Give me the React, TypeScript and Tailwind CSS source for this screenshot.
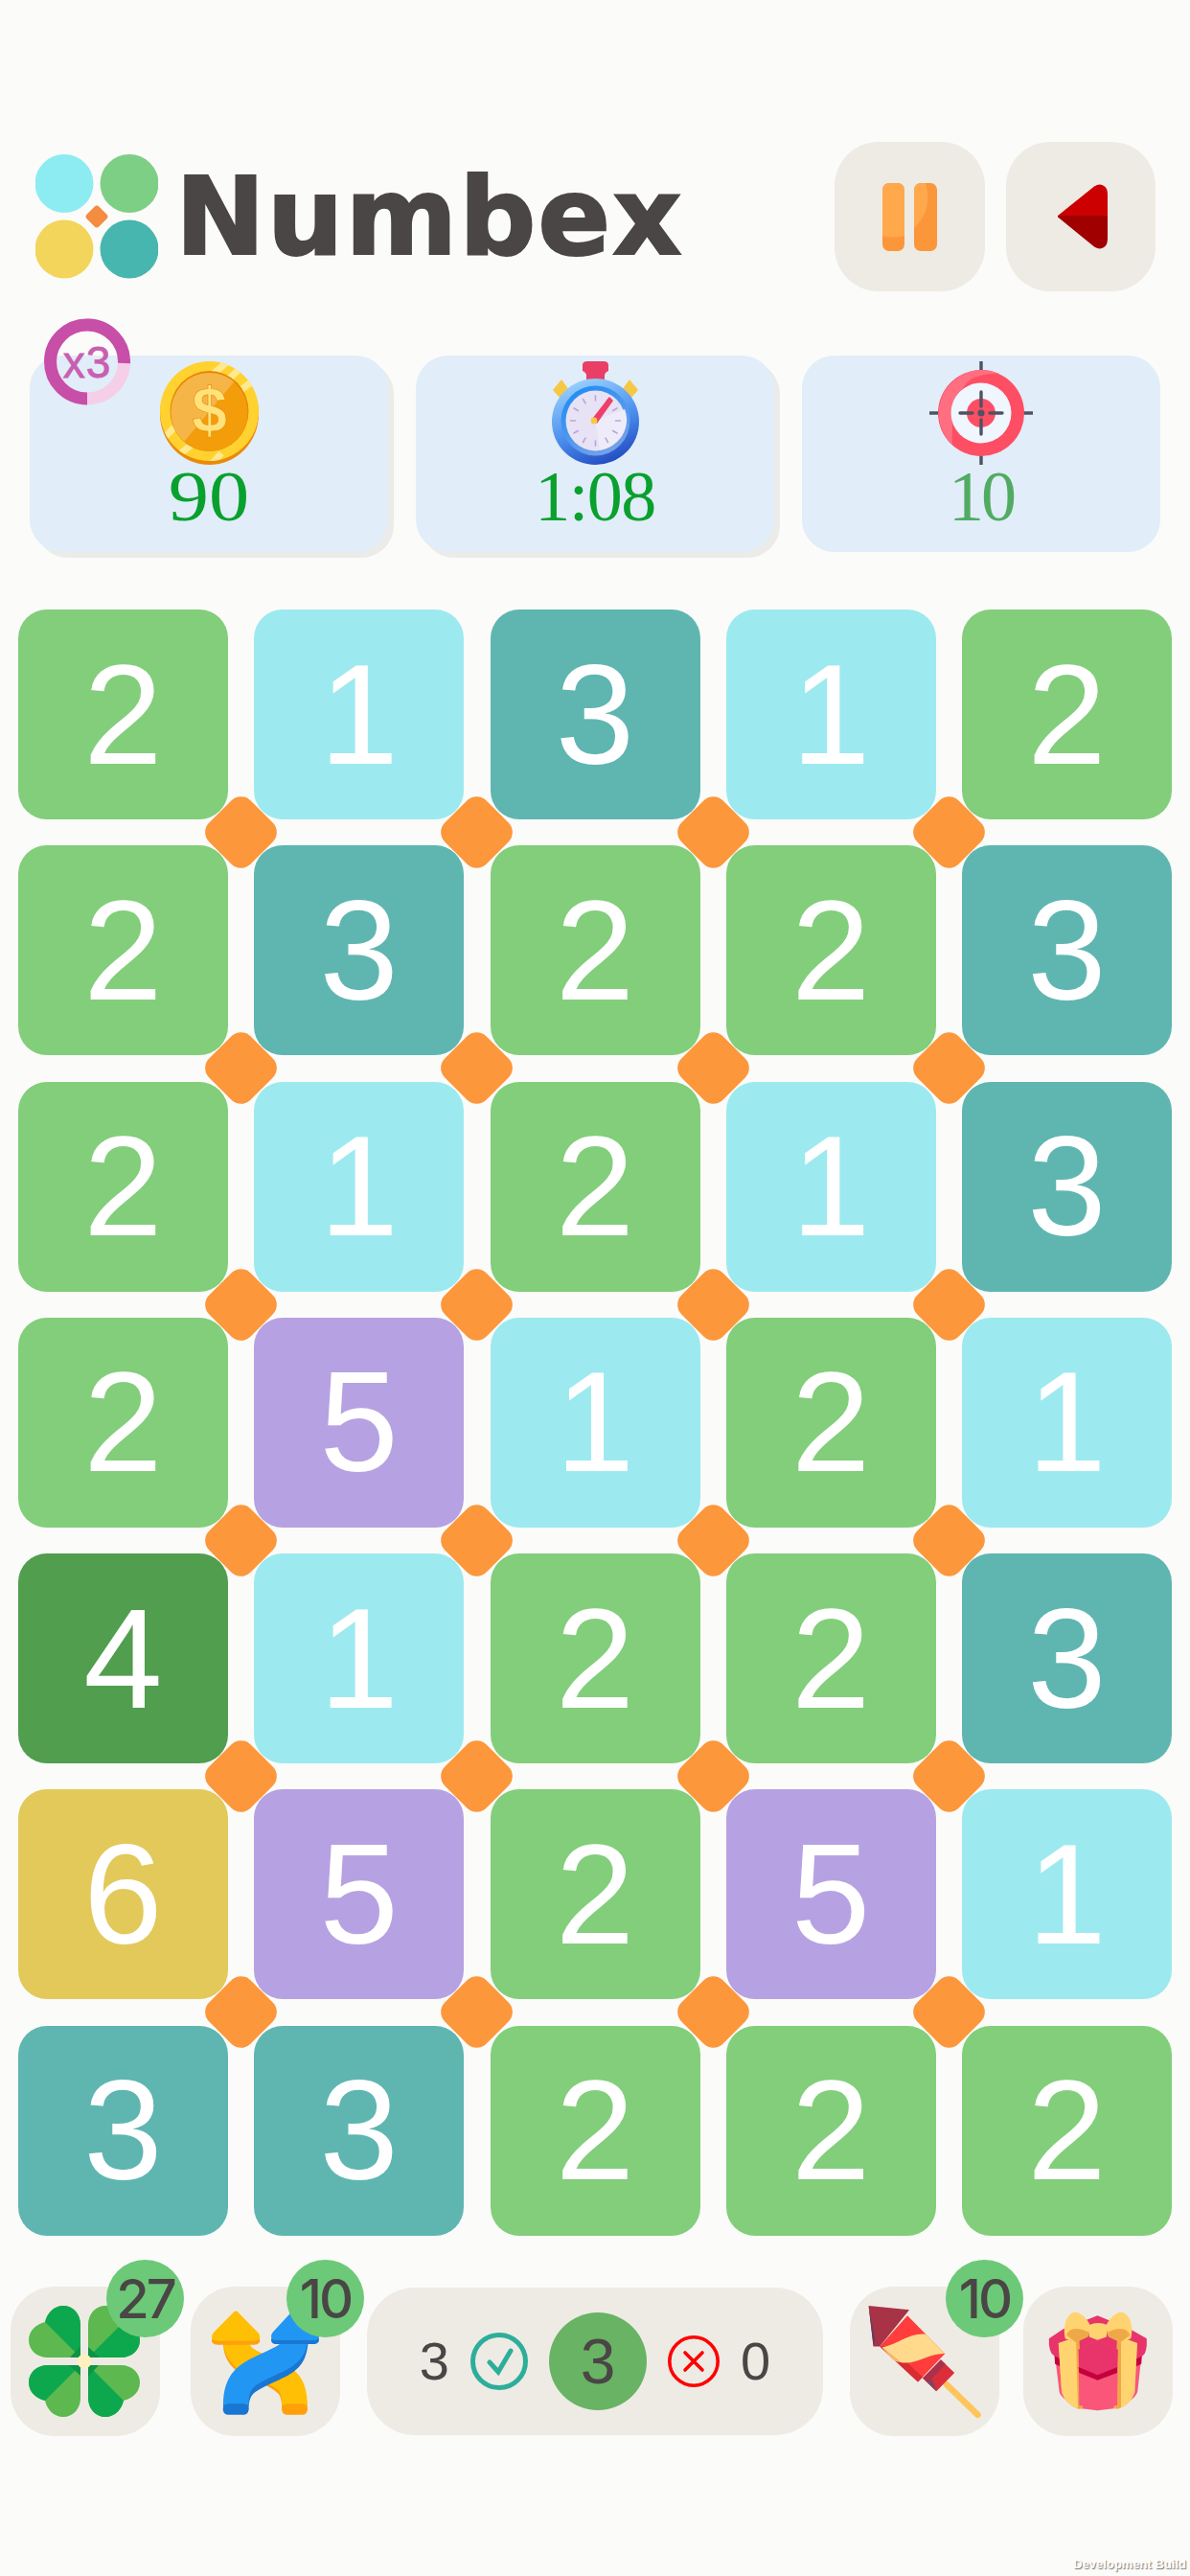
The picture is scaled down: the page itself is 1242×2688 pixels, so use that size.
const board = ['21312', '23223', '21213', '25121', '41223', '65251', '33222'];

const tileColors: Record<string, string> = {
  '1': 'bg-[#9CEAEF]',
  '2': 'bg-[#82CE7B]',
  '3': 'bg-[#5FB6B1]',
  '4': 'bg-[#509E4E]',
  '5': 'bg-[#B6A2E2]',
  '6': 'bg-[#E2C95A]',
};

function Logo() {
  return (
    <svg width="128" height="130" viewBox="0 0 128 130">
      <circle cx="30" cy="30.5" r="30.5" fill="#8CECF2" />
      <circle cx="98" cy="30.5" r="30.5" fill="#7DCF86" />
      <circle cx="30" cy="99" r="30.5" fill="#F2D55A" />
      <circle cx="98" cy="99" r="30.5" fill="#47B6AE" />
      <rect x="55" y="56" width="18" height="18" rx="3.5" fill="#F48C42" transform="rotate(45 64 65)" />
    </svg>
  );
}

function PauseIcon() {
  return (
    <svg width="57" height="71" viewBox="0 0 57 71">
      <rect x="0" y="0" width="23" height="71" rx="7" fill="#FB973A" />
      <path d="M0 7a7 7 0 0 1 7-7h9a7 7 0 0 1 7 7v48q-11 3-23 0z" fill="#FFA94C" />
      <rect x="33" y="0" width="24" height="71" rx="7" fill="#FB973A" />
      <path d="M33 7a7 7 0 0 1 7-7h5q8 28-12 47z" fill="#FFA94C" />
    </svg>
  );
}

function BackIcon() {
  return (
    <svg width="56" height="72" viewBox="0 0 56 72">
      <path d="M4 35.5 42 5q5-3 9 0 3 2 3 8v23z" fill="#CC0000" stroke="#CC0000" strokeWidth="2" strokeLinejoin="round" />
      <path d="M4 36h50v23q0 6-3 8-4 3-9 0z" fill="#A00000" stroke="#A00000" strokeWidth="2" strokeLinejoin="round" />
    </svg>
  );
}

function Coin() {
  return (
    <svg width="103" height="108" viewBox="0 0 103 108">
      <defs>
        <clipPath id="coin-rim">
          <ellipse cx="51.5" cy="52" rx="51.5" ry="52" />
        </clipPath>
        <clipPath id="coin-face">
          <ellipse cx="51.5" cy="53" rx="40" ry="41" />
        </clipPath>
      </defs>
      <ellipse cx="51.5" cy="55" rx="51.5" ry="53" fill="#EA8A0B" />
      <ellipse cx="51.5" cy="52" rx="51.5" ry="52" fill="#FFD22F" />
      <g clipPath="url(#coin-rim)" stroke="#FFE98F" strokeWidth="7">
        <path d="M50 18 80 -8M68 22 96 -4M84 30 112 10M-4 88 18 66M12 104 34 86M50 112 64 96" />
      </g>
      <ellipse cx="51.5" cy="52" rx="41" ry="42" fill="#E4850C" />
      <ellipse cx="51.5" cy="53" rx="40" ry="41" fill="#F39D0A" />
      <path d="M0 0H95L20 90 0 80z" fill="#F6B547" clipPath="url(#coin-face)" />
      <text x="51.5" y="74" textAnchor="middle" fontFamily="Liberation Sans, sans-serif" fontWeight="700" fontSize="66" fill="#FFE27A" stroke="#E98A0D" strokeWidth="0.6">
        $
      </text>
    </svg>
  );
}

function Stopwatch() {
  const ticks = [0, 30, 60, 90, 120, 150, 180, 210, 240, 270, 300, 330];
  return (
    <svg width="91" height="108" viewBox="0 0 91 108">
      <defs>
        <linearGradient id="watch-body" x1="0.3" y1="0" x2="0.7" y2="1">
          <stop offset="0" stopColor="#9AD2FB" />
          <stop offset="0.55" stopColor="#4A8EEE" />
          <stop offset="1" stopColor="#2148BE" />
        </linearGradient>
        <linearGradient id="watch-ring" x1="0.2" y1="0" x2="0.8" y2="1">
          <stop offset="0" stopColor="#1F8CF5" />
          <stop offset="1" stopColor="#7BA3E8" />
        </linearGradient>
      </defs>
      <path d="M32 4q0-4 5-4h17q5 0 5 4v6q-3 1-4 4v6H36v-6q-1-3-4-4z" fill="#E93E66" />
      <path d="M1 30 10 19 18 30 9 39z" fill="#F7C843" />
      <path d="M90 30 81 19 73 30 82 39z" fill="#F7C843" />
      <ellipse cx="45.5" cy="63" rx="45.5" ry="45" fill="url(#watch-body)" />
      <ellipse cx="45.5" cy="62" rx="36" ry="36.5" fill="url(#watch-ring)" />
      <ellipse cx="45.5" cy="62" rx="31" ry="31.5" fill="#E7E3F5" />
      <path d="M45.5 62 76 50A31 31 0 0 1 50 92z" fill="#EFECF9" />
      {ticks.map((angle) => (
        <line key={angle} x1="45.5" y1="36" x2="45.5" y2="41" stroke="#B9A4DC" strokeWidth="1.6" strokeLinecap="round" transform={`rotate(${angle} 45.5 62)`} />
      ))}
      <path d="M42 60 60 37 64 41 47 65z" fill="#EE3F6A" />
      <circle cx="44" cy="62" r="3.4" fill="#F7C843" />
    </svg>
  );
}

function Target() {
  return (
    <svg width="108" height="108" viewBox="0 0 108 108">
      <path d="M54 0V9M54 99v9M0 54h9M99 54h9" stroke="#4D5364" strokeWidth="3.4" strokeLinecap="round" />
      <circle cx="54" cy="54" r="45" fill="#FE4E64" />
      <path d="M24 87A45 45 0 0 1 73 13Q60 12 44 18 21 36 24 87z" fill="#FF6F81" />
      <circle cx="54" cy="54" r="31.5" fill="#EFF6FE" />
      <circle cx="54" cy="54" r="15" fill="#FE4E64" />
      <path d="M54 32v15M54 61v15M32 54h13M63 54h13" stroke="#4D5364" strokeWidth="3.4" strokeLinecap="round" />
      <circle cx="54" cy="54" r="3.6" fill="#4D5364" />
    </svg>
  );
}

function MultiplierRing() {
  return (
    <div className="absolute left-[15px] top-[-39px] flex h-[91px] w-[90px] items-center justify-center">
      <svg className="absolute inset-0" width="90" height="91" viewBox="0 0 90 91">
        <circle cx="45" cy="45.5" r="38.5" fill="none" stroke="#F5CFE8" strokeWidth="13" />
        <path d="M83.5 47A38.5 38.5 0 1 0 45 84" fill="none" stroke="#C74FA8" strokeWidth="13" />
      </svg>
      <span className="relative font-['Liberation_Sans',sans-serif] text-[46px] leading-none tracking-[1px] text-[#C95FB0] [-webkit-text-stroke:0.8px_#C95FB0]">x3</span>
    </div>
  );
}

function Clover() {
  const leafAngles = [0, 90, 180, 270];
  return (
    <svg className="h-full w-full" viewBox="-77 -78 156 156">
      {leafAngles.map((angle) => (
        <g key={angle} transform={`rotate(${angle})`}>
          <path d="M-4-4V-38C-4-50-12-58-22-58C-32-58-39-50-41-41C-50-39-58-32-58-22C-58-12-50-4-38-4Z" fill="#5CB84F" />
          <path d="M-4-4V-38C-4-50-12-58-22-58C-32-58-39-50-41-41Z" fill="#0DA84D" />
          <path d="M-4-4V-16L-15-4Z" fill="#0B9445" />
        </g>
      ))}
      <circle r="7.5" fill="#FFF0C0" />
    </svg>
  );
}

function SwapArrows() {
  return (
    <svg className="h-full w-full" viewBox="596 137 468 470">
      <path d="M737 312C737 380 800 385 850 412C900 438 922 455 922 526" fill="none" stroke="#FF9F0A" strokeWidth="80" />
      <path d="M737 300C737 370 800 378 850 404C900 428 922 445 922 510" fill="none" stroke="#FFBF05" strokeWidth="80" />
      <path d="M737 222 672 288Q664 300 680 300H794Q810 300 802 288Z" transform="translate(0 12)" fill="#FF9F0A" stroke="#FF9F0A" strokeWidth="16" strokeLinejoin="round" />
      <path d="M737 222 672 288Q664 300 680 300H794Q810 300 802 288Z" fill="#FFBF05" stroke="#FFBF05" strokeWidth="16" strokeLinejoin="round" />
      <rect x="882" y="505" width="80" height="35" rx="16" fill="#FF9F0A" />
      <path d="M737 526C737 440 780 430 860 392C910 370 925 350 925 295" fill="none" stroke="#1976D2" strokeWidth="80" />
      <path d="M737 510C737 420 780 410 860 372C910 350 925 330 925 280" fill="none" stroke="#2196F3" strokeWidth="80" />
      <path d="M925 215 860 285Q850 298 866 298H980Q996 298 988 285Z" transform="translate(0 12)" fill="#1976D2" stroke="#1976D2" strokeWidth="16" strokeLinejoin="round" />
      <path d="M925 215 860 285Q850 298 866 298H980Q996 298 988 285Z" fill="#2196F3" stroke="#2196F3" strokeWidth="16" strokeLinejoin="round" />
      <rect x="697" y="505" width="80" height="35" rx="16" fill="#1976D2" />
    </svg>
  );
}

function Rocket() {
  return (
    <svg className="h-full w-full" viewBox="82 137 468 470">
      <path d="M385 445 483 540" stroke="#FFC45C" strokeWidth="20" strokeLinecap="round" />
      <path d="M367 367 410 408 353 466 310 425Z" fill="#DB2E3A" />
      <path d="M340 395 367 367 382 381 326 440 310 425Z" fill="#A9324A" />
      <path d="M310 425 326 440 340 428 353 466Z" fill="#7D4463" />
      <path d="M262 228 380 348 295 437 175 325Z" fill="#FF3D3D" />
      <path d="M175 325 205 322 310 422 295 437Z" fill="#D92B32" />
      <path d="M182 328C230 320 270 280 320 287L380 348C330 345 290 385 240 375Z" fill="#FFD98C" />
      <path d="M182 328 240 375C225 375 218 370 205 355Z" fill="#F7BE68" />
      <path d="M140 197 268 210 175 325 155 325Z" fill="#A83246" />
      <path d="M140 197 160 300 155 325Z" fill="#6B3A5E" />
    </svg>
  );
}

function Gift() {
  return (
    <svg className="h-full w-full" viewBox="624 137 471 470">
      <path d="M722 340 738 470Q745 490 800 520L858 527 915 520Q985 490 985 460L998 340Z" fill="#F9567A" />
      <path d="M722 350 724 380 800 415 920 415 996 380 998 350Z" fill="#C5003E" />
      <path d="M705 300Q703 345 722 355L800 395 858 420 920 395 1000 355Q1015 345 1013 300L960 270 858 228 750 270Z" fill="#E8346A" />
      <path d="M735 315 800 295 812 520 798 522Q760 510 745 470Z" fill="#EFA848" />
      <path d="M735 315 790 295 796 520Q760 510 745 470Z" fill="#FFD470" />
      <path d="M920 295 983 315 975 470Q960 510 922 522L908 520Z" fill="#EFA848" />
      <path d="M932 295 983 315 975 470Q960 510 932 518Z" fill="#FFD470" />
      <path d="M798 335 858 305 922 335 920 510 858 527 800 510Z" fill="#F9567A" />
      <path d="M798 335 858 305 922 335 920 395 858 432 800 395Z" fill="#E8346A" />
      <path d="M798 390 858 415 920 390 920 408 858 432 800 408Z" fill="#C5003E" />
      <path d="M756 300C745 250 770 205 800 220 815 228 830 245 835 260L830 290 790 312Z" fill="#FFD470" />
      <path d="M760 290C765 270 790 260 830 280L828 295 790 312Z" fill="#EFA848" />
      <path d="M963 300C975 250 950 205 920 220 905 228 890 245 885 260L890 290 930 312Z" fill="#FFD470" />
      <path d="M960 290C955 270 930 260 890 280L892 295 930 312Z" fill="#EFA848" />
      <path d="M830 258Q860 245 890 258L886 295 858 305 832 295Z" fill="#FFD470" />
    </svg>
  );
}

function CheckCircle() {
  return (
    <svg width="60" height="60" viewBox="0 0 60 60">
      <circle cx="30" cy="30" r="27.5" fill="none" stroke="#2DAE9A" strokeWidth="5" />
      <path d="M20 31 29 41 42 19" fill="none" stroke="#2DAE9A" strokeWidth="5" strokeLinecap="round" strokeLinejoin="miter" />
    </svg>
  );
}

function CrossCircle() {
  return (
    <svg width="54" height="54" viewBox="0 0 54 54">
      <circle cx="27" cy="27" r="25.2" fill="none" stroke="#FF0000" strokeWidth="3.6" />
      <path d="M18 18 36 36M36 18 18 36" fill="none" stroke="#FF0000" strokeWidth="3.6" strokeLinecap="round" />
    </svg>
  );
}

function ToolButton({ badge, className, children }: { badge?: number; className: string; children: React.ReactNode }) {
  return (
    <div className={`relative h-[156px] w-[156px] shrink-0 rounded-[46px] bg-[#EEEBE5] ${className}`}>
      {children}
      {badge !== undefined && (
        <div className="absolute -right-[25px] -top-[28px] flex h-[81px] w-[81px] items-center justify-center rounded-full bg-[#6CC978] font-['Inter',sans-serif] text-[56px] font-medium tracking-[-3px] text-[#4A4645]">
          {badge}
        </div>
      )}
    </div>
  );
}

function StatCard({ value, icon, raised, children, valueClass }: { value: string; icon: React.ReactNode; raised?: boolean; children?: React.ReactNode; valueClass: string }) {
  return (
    <div className={`relative flex h-[205px] w-[374px] flex-col items-center rounded-[34px] bg-[#E1EDF9] pt-[6px] ${raised ? 'shadow-[6px_6px_0_#ebebe9]' : ''}`}>
      {children}
      {icon}
      <div className={`font-['Liberation_Serif',serif] text-[74px] leading-[66px] ${valueClass}`}>{value}</div>
    </div>
  );
}

export default function App() {
  return (
    <div className="relative h-[2688px] w-[1242px] overflow-hidden bg-[#FBFBF9] pt-[148px]">
      <header className="flex h-[156px] items-center pl-[37px] pr-[36px]">
        <Logo />
        <h1 className="ml-[18px] font-['DejaVu_Sans',sans-serif] text-[112px] font-bold leading-none tracking-[2px] text-[#4A4645] [-webkit-text-stroke:2px_#4A4645]">Numbex</h1>
        <div className="ml-auto flex gap-[22px]">
          <button className="flex h-[156px] w-[157px] items-center justify-center rounded-[46px] bg-[#EEEBE5]">
            <PauseIcon />
          </button>
          <button className="flex h-[156px] w-[156px] items-center justify-center rounded-[46px] bg-[#EEEBE5] pl-[2px]">
            <BackIcon />
          </button>
        </div>
      </header>

      <section className="mt-[67px] flex gap-[29px] pl-[31px]">
        <StatCard value="90" icon={<Coin />} raised valueClass="scale-x-[1.14] text-[#0AA02E]">
          <MultiplierRing />
        </StatCard>
        <StatCard value="1:08" icon={<Stopwatch />} raised valueClass="tracking-[-1.5px] text-[#0AA02E]" />
        <StatCard value="10" icon={<Target />} valueClass="tracking-[-3px] text-[#52AB62]" />
      </section>

      <main className="mt-[60px] grid w-[1242px] grid-cols-[repeat(5,219px)] gap-[27.25px] px-[19px]">
        {board.map((row, r) =>
          row.split('').map((digit, c) => (
            <div key={`${r}-${c}`} className={`relative flex h-[219px] w-[219px] items-center justify-center rounded-[30px] font-['Liberation_Sans',sans-serif] text-[148px] leading-none text-white ${tileColors[digit]}`}>
              {digit}
              {r < 6 && c < 4 && (
                <span className="absolute -bottom-[44px] -right-[44px] z-10 h-[61px] w-[61px] rotate-45 rounded-[14px] bg-[#FC973C]" />
              )}
            </div>
          )),
        )}
      </main>

      <footer className="mt-[53.5px] flex items-start pl-[11px]">
        <ToolButton badge={27} className="z-10">
          <Clover />
        </ToolButton>
        <ToolButton badge={10} className="z-10 ml-[32px]">
          <SwapArrows />
        </ToolButton>
        <div className="ml-[28px] mt-px flex h-[154px] w-[476px] items-center justify-center gap-[22px] rounded-[50px] bg-[#EEEBE5] font-['Liberation_Sans',sans-serif] text-[56px] text-[#4A4645]">
          <span>3</span>
          <CheckCircle />
          <div className="flex h-[102px] w-[102px] items-center justify-center rounded-full bg-[#69B364] text-[66px]">3</div>
          <CrossCircle />
          <span>0</span>
        </div>
        <ToolButton badge={10} className="z-10 ml-[28px]">
          <Rocket />
        </ToolButton>
        <ToolButton className="ml-[25px]">
          <Gift />
        </ToolButton>
      </footer>

      <div className="absolute bottom-[6px] right-[4px] font-['Liberation_Sans',sans-serif] text-[13px] font-bold leading-none text-white [text-shadow:1px_1px_1px_#777]">
        Development Build
      </div>
    </div>
  );
}
